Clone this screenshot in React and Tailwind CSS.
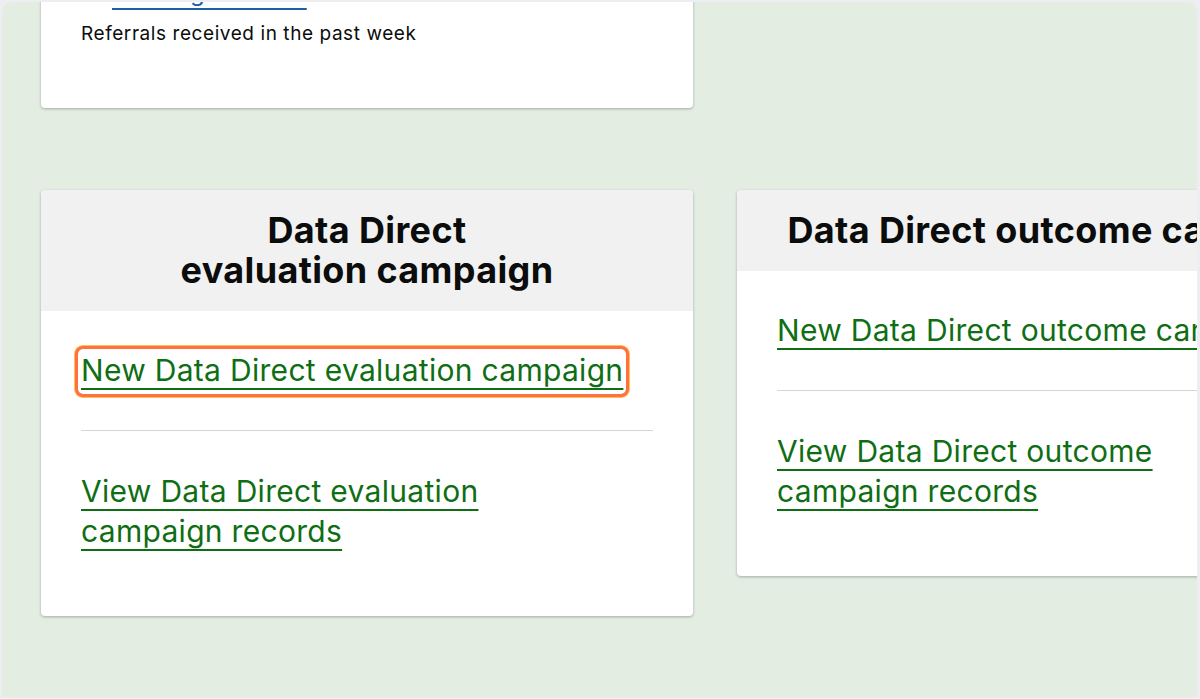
import React from 'react';

const linkCls =
  'text-[#0f6e14] underline decoration-2 underline-offset-[7px] decoration-[#0f6e14]';

const Card = ({ title, children }) => (
  <div className="bg-white rounded-[4px] shadow-[0_1px_3px_rgba(0,0,0,0.28)] overflow-hidden">
    <div className="bg-[#f1f1f1] px-10 pt-5 pb-[21px] text-center">
      <h2 className="text-[36px] leading-[40px] font-bold tracking-[0.01em] text-[#0b0c0c] whitespace-pre-line">
        {title}
      </h2>
    </div>
    <div className="px-10 pt-[39px] pb-[65px] text-[30px] leading-[40px] tracking-[0.01em]">
      {children}
    </div>
  </div>
);

export default function App() {
  return (
    <div className="w-[1200px] h-[699px] bg-[#eeedf2] p-[2px] pr-[3px] font-[Inter,'Open_Sans',sans-serif]">
      <div className="h-[695px] rounded-t-[10px] bg-[#e3ede2] overflow-hidden">
        <div className="grid grid-cols-[652px_652px] gap-x-[44px] gap-y-[82px] pl-[39px] -mt-[102px] items-start">
          {/* Referrals summary card */}
          <div className="bg-white rounded-[4px] shadow-[0_1px_3px_rgba(0,0,0,0.28)] px-10 pt-[77px] pb-[62px]">
            <div className="text-[24px] leading-[32px] pl-[31px]">
              <a href="#" className="text-[#1d5fa8] underline decoration-2 underline-offset-[7px]">
                Pending referrals
              </a>
            </div>
            <p className="mt-[13px] text-[19px] leading-[24px] tracking-[0.03em] text-[#0b0c0c]">
              Referrals received in the past week
            </p>
          </div>
          <div />

          <Card title={'Data Direct\nevaluation campaign'}>
            <a
              href="#"
              className={`${linkCls} inline-block -mx-[3px] px-[3px] -mt-px pt-px -mb-1 pb-1 rounded-[5px] shadow-[0_0_0_3px_#ff7043,0_0_0_4px_#ffc04d]`}
            >
              New Data Direct evaluation campaign
            </a>
            <hr className="my-10 border-t border-[#d6d6d6]" />
            <a href="#" className={linkCls}>
              View Data Direct evaluation
              <br />
              campaign records
            </a>
          </Card>

          <Card title="Data Direct outcome campaign">
            <a href="#" className={`${linkCls} whitespace-nowrap`}>
              New Data Direct outcome campaign
            </a>
            <hr className="my-10 border-t border-[#d6d6d6]" />
            <a href="#" className={linkCls}>
              View Data Direct outcome
              <br />
              campaign records
            </a>
          </Card>
        </div>
      </div>
    </div>
  );
}
